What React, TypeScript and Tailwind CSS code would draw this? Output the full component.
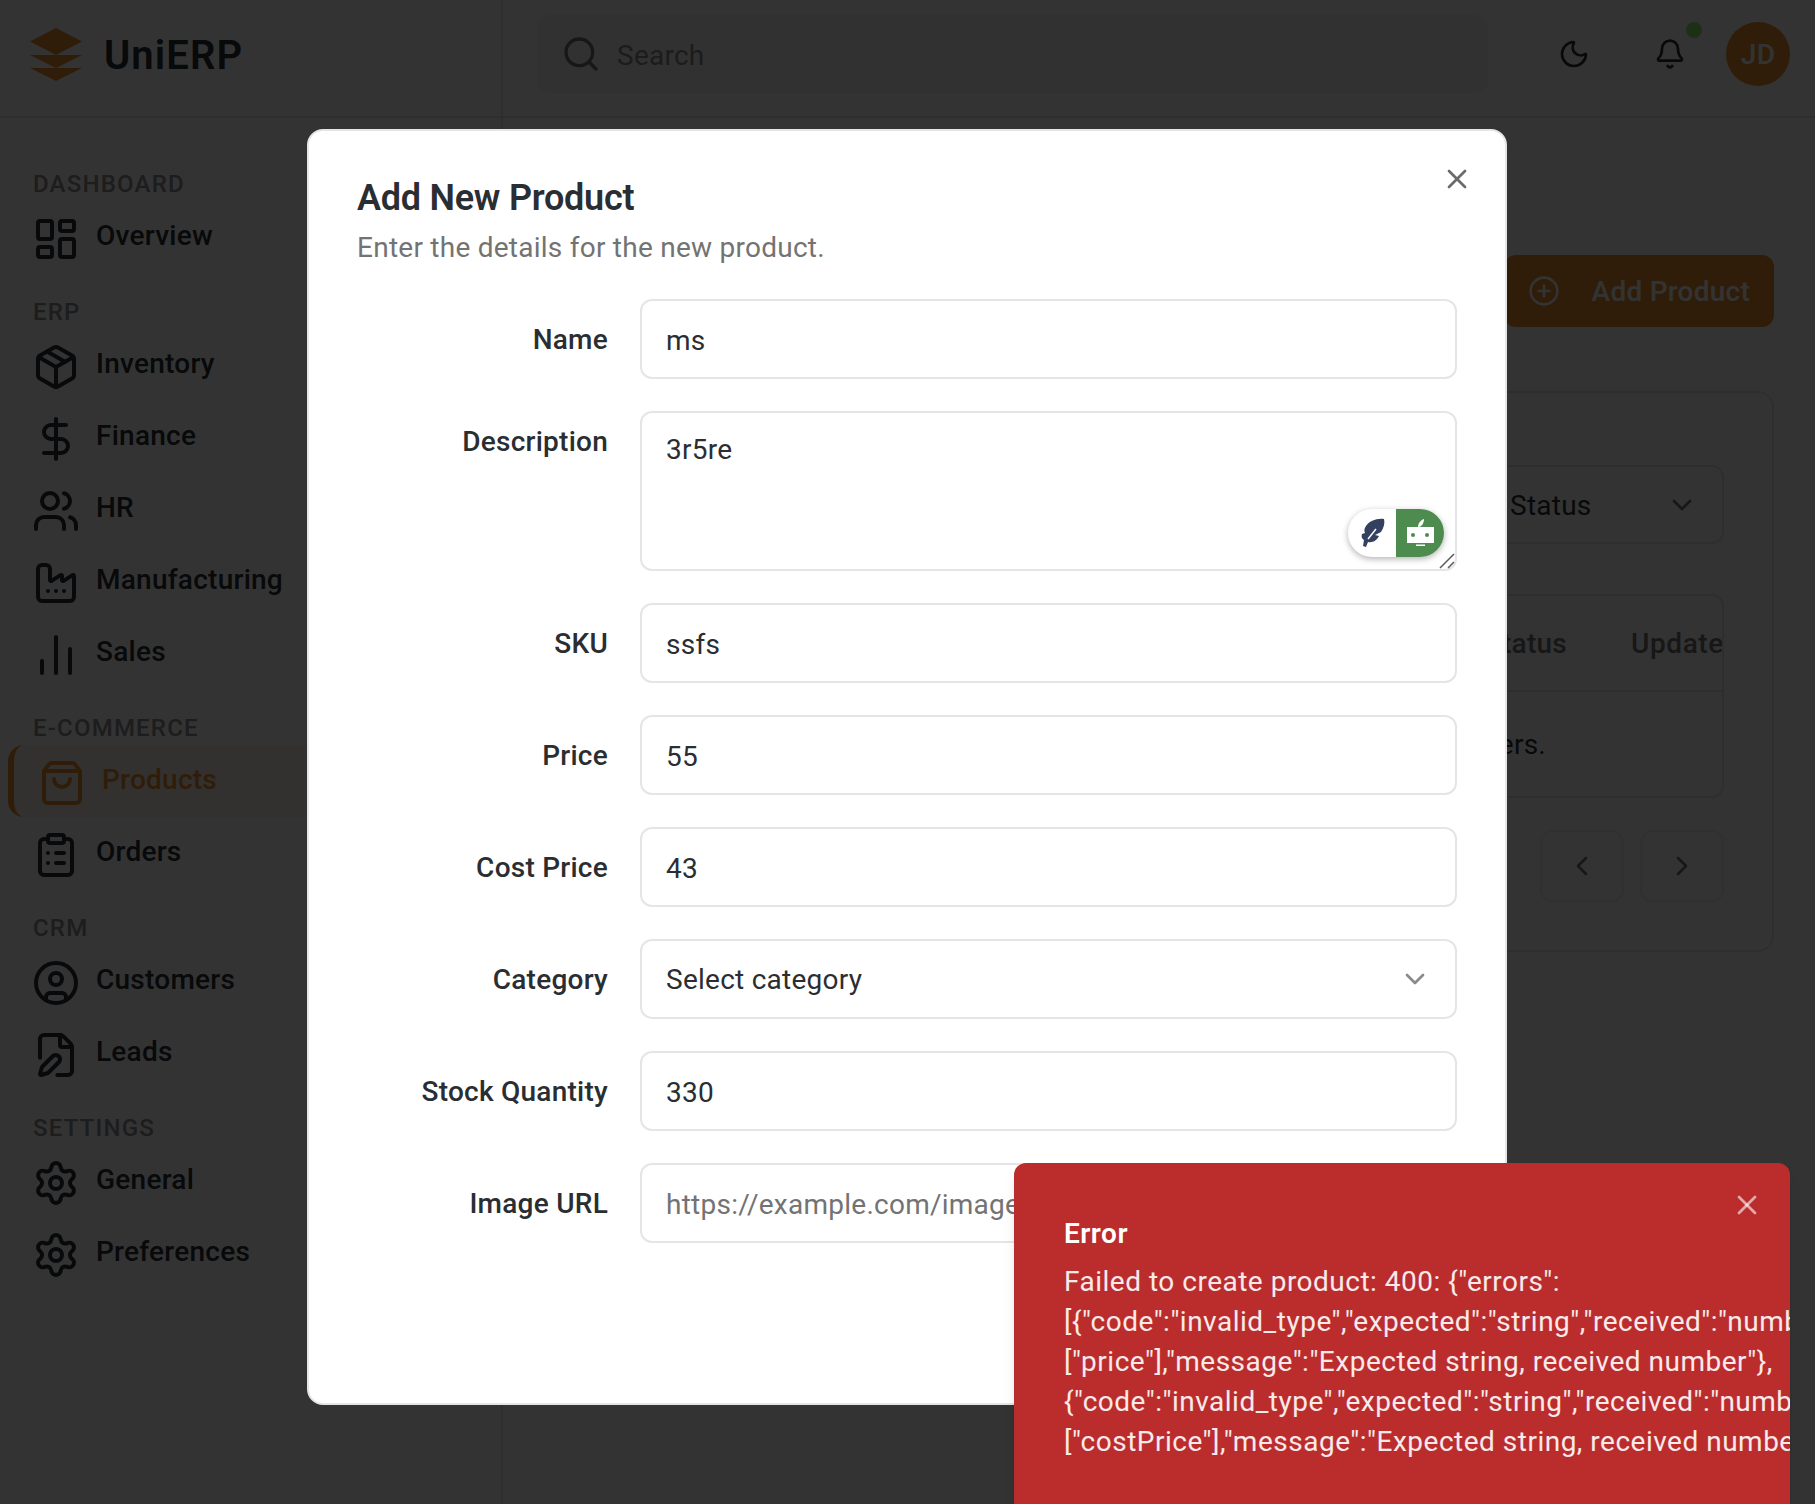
import React from 'react';
import {
  Bell,
  ChartNoAxesColumn,
  ChevronDown,
  ChevronLeft,
  ChevronRight,
  CircleUser,
  ClipboardList,
  DollarSign,
  Factory,
  FilePen,
  LayoutDashboard,
  Moon,
  Package,
  PlusCircle,
  Search,
  Settings,
  ShoppingBag,
  Users,
  X,
} from 'lucide-react';

const navSections = [
  { title: 'DASHBOARD', items: [{ label: 'Overview', icon: LayoutDashboard }] },
  {
    title: 'ERP',
    items: [
      { label: 'Inventory', icon: Package },
      { label: 'Finance', icon: DollarSign },
      { label: 'HR', icon: Users },
      { label: 'Manufacturing', icon: Factory },
      { label: 'Sales', icon: ChartNoAxesColumn },
    ],
  },
  {
    title: 'E-COMMERCE',
    items: [
      { label: 'Products', icon: ShoppingBag, active: true },
      { label: 'Orders', icon: ClipboardList },
    ],
  },
  {
    title: 'CRM',
    items: [
      { label: 'Customers', icon: CircleUser },
      { label: 'Leads', icon: FilePen },
    ],
  },
  {
    title: 'SETTINGS',
    items: [
      { label: 'General', icon: Settings },
      { label: 'Preferences', icon: Settings },
    ],
  },
];

const fields = [
  { label: 'Name', value: 'ms' },
  { label: 'Description', value: '3r5re', area: true },
  { label: 'SKU', value: 'ssfs' },
  { label: 'Price', value: '55' },
  { label: 'Cost Price', value: '43' },
  { label: 'Category', value: 'Select category', select: true },
  { label: 'Stock Quantity', value: '330' },
  { label: 'Image URL', value: '', placeholder: 'https://example.com/image.jpg' },
];

const errorLines = [
  'Failed to create product: 400: {"errors":',
  '[{"code":"invalid_type","expected":"string","received":"number","path":',
  '["price"],"message":"Expected string, received number"},',
  '{"code":"invalid_type","expected":"string","received":"number","path":',
  '["costPrice"],"message":"Expected string, received number"}]}',
];

const inputClass =
  'h-20 w-full rounded-xl border-2 border-[#e5e5e5] bg-white px-6 pt-[2px] text-[28px] text-[#2a2e33] placeholder:text-[#737373] outline-none';

const App: React.FC = () => {
  return (
    <div className="relative flex h-[1504px] overflow-hidden bg-white font-['Roboto',sans-serif] tracking-[0.25px] text-[#2a2e33]">
      <aside className="w-[503px] shrink-0 border-r-2 border-[#e5e5e5]">
        <div className="flex h-[118px] items-center gap-[22px] border-b-2 border-[#e5e5e5] pb-2 pl-[30px]">
          <svg width="52" height="53" viewBox="0 0 52 53" fill="#eb912d">
            <polygon points="26,0 52,13.5 26,27 0,13.5" />
            <polygon points="0,27 52,27 26,40" />
            <polygon points="0,40 52,40 26,53" />
          </svg>
          <span className="pt-1 text-[40px] font-semibold tracking-[1.1px]">UniERP</span>
        </div>
        <nav className="pt-[51px]">
          {navSections.map((section, i) => (
            <div key={section.title} className={i > 0 ? 'mt-6' : ''}>
              <div className="pb-[2px] pl-[33px] text-2xl leading-[30px] font-medium tracking-[1.2px] text-[#909090]">
                {section.title}
              </div>
              {section.items.map((item) => {
                const Icon = item.icon;
                return (
                  <div
                    key={item.label}
                    className={
                      item.active
                        ? 'ml-2 flex h-[72px] items-center gap-4 rounded-l-2xl border-l-[6px] border-[#eb912d] bg-[#eb912d]/10 pl-6 text-[28px] font-medium text-[#eb912d]'
                        : 'ml-2 flex h-[72px] items-center gap-4 pl-6 text-[28px] font-medium'
                    }
                  >
                    <Icon className="mt-[3px] size-12 shrink-0" strokeWidth={2} />
                    <span className="pb-[2px]">{item.label}</span>
                  </div>
                );
              })}
            </div>
          ))}
        </nav>
      </aside>

      <div className="min-w-0 flex-1">
        <header className="flex h-[118px] items-center border-b-2 border-[#e5e5e5] pb-2 pl-[34px]">
          <div className="flex h-[78px] w-[951px] items-center gap-4 rounded-xl bg-[#f5f5f5] pl-6 text-[28px] text-[#8c8c8c]">
            <Search className="size-10 text-[#737373]" strokeWidth={2} />
            <span className="pt-1">Search</span>
          </div>
          <Moon className="ml-[70px] size-8" strokeWidth={2} />
          <div className="relative ml-16">
            <Bell className="size-8" strokeWidth={2} />
            <span className="absolute -top-4 -right-4 size-4 rounded-full bg-[#8aea74]" />
          </div>
          <div className="ml-10 flex size-16 items-center justify-center rounded-full bg-[#eb912d] pt-[2px] text-[28px] font-medium text-white">
            JD
          </div>
        </header>

        <main className="pt-[137px] pr-[41px] pl-12">
          <div className="flex justify-end">
            <div className="flex h-[72px] items-center gap-[32px] rounded-xl bg-[#eb912d] px-6 text-[28px] font-medium text-white">
              <PlusCircle className="size-8" strokeWidth={2} />
              <span className="pt-[2px]">Add Product</span>
            </div>
          </div>
          <div className="mt-16 rounded-2xl border-2 border-[#e5e5e5] p-12">
            <div className="mt-6 flex justify-end">
              <div className="flex h-[79px] w-[240px] items-center justify-between rounded-xl border-2 border-[#e5e5e5] px-6 text-[28px]">
                <span className="pt-[2px]">Status</span>
                <ChevronDown className="size-8 text-[#737373]" strokeWidth={2} />
              </div>
            </div>
            <div className="mt-[50px] rounded-xl border-2 border-[#e5e5e5]">
              <div className="flex h-[96px] items-center justify-end border-b-2 border-[#e5e5e5] pt-[2px] text-[28px] font-medium text-[#737373]">
                <span>Status</span>
                <span className="ml-16 w-[91px] overflow-hidden tracking-[0.6px] whitespace-nowrap">Update</span>
              </div>
              <div className="flex h-[104px] items-center justify-end pt-[2px] pr-[176px] text-[28px]">
                No products found matching your filters.
              </div>
            </div>
            <div className="mt-8 flex justify-end gap-4">
              <div className="flex h-[72px] w-[84px] items-center justify-center rounded-xl border-2 border-[#f0f0f0] text-[#737373]">
                <ChevronLeft className="size-8" strokeWidth={2} />
              </div>
              <div className="flex h-[72px] w-[84px] items-center justify-center rounded-xl border-2 border-[#f0f0f0] text-[#737373]">
                <ChevronRight className="size-8" strokeWidth={2} />
              </div>
            </div>
          </div>
        </main>
      </div>

      <div className="absolute inset-0 bg-black/80" />

      <div className="absolute top-[129px] left-[307px] w-[1200px] rounded-2xl border-2 border-[#e5e5e5] bg-white p-12">
        <X className="absolute top-[32px] right-[32px] size-8 text-[#6b6b6b]" strokeWidth={2} />
        <h2 className="mt-px text-[36px] leading-none font-semibold tracking-[-0.25px]">Add New Product</h2>
        <p className="mt-3 text-[28px] leading-10 text-[#737373]">Enter the details for the new product.</p>
        <div className="mt-[31px] grid grid-cols-4 gap-8">
          {fields.map((field) => (
            <React.Fragment key={field.label}>
              <label
                className={
                  field.area
                    ? 'pt-[11px] text-right text-[28px] leading-10 font-medium'
                    : 'flex h-20 items-center justify-end pt-[2px] text-[28px] font-medium'
                }
              >
                {field.label}
              </label>
              <div className="relative col-span-3">
                {field.area ? (
                  <>
                    <textarea
                      readOnly
                      value={field.value}
                      className="block h-40 w-full resize-none rounded-xl border-2 border-[#e5e5e5] bg-white px-6 pt-[17px] pb-4 text-[28px] leading-10 text-[#2a2e33] outline-none"
                    />
                    <div className="absolute right-[13px] bottom-[14px] flex h-12 w-24 overflow-hidden rounded-full bg-white shadow-[0_2px_6px_rgba(0,0,0,0.3)]">
                      <div className="h-12 w-12">
                        <svg width="48" height="48" viewBox="0 0 48 48">
                          <path
                            fill="#34405f"
                            d="M36 10C29 9 21 12 18 17C16 20 16 22 17 24L14 25C13 28 14 30 16 31L15 37L18 38L20 33C25 34 29 31 31 27L27 26L33 23C36 18 37 14 36 10Z"
                          />
                          <path stroke="#fff" strokeWidth="1.5" d="M20 30L28 20" />
                        </svg>
                      </div>
                      <div className="h-12 w-12 bg-[#4e8b4e]">
                        <svg width="48" height="48" viewBox="0 0 48 48">
                          <path fill="#fff" d="M22 18C22 14 25 11 28 10C28 14 26 17 23 18Z" />
                          <rect x="11" y="18" width="27" height="16" fill="#fff" />
                          <circle cx="17" cy="26" r="2" fill="#4e8b4e" />
                          <circle cx="31" cy="26" r="2" fill="#4e8b4e" />
                          <rect x="20" y="35.5" width="9" height="1.5" fill="#fff" />
                        </svg>
                      </div>
                    </div>
                    <svg
                      className="absolute right-[2px] bottom-[2px]"
                      width="16"
                      height="16"
                      viewBox="0 0 16 16"
                      stroke="#5a5a5a"
                      strokeWidth="1.5"
                    >
                      <path d="M15 1L1 15M15 9L9 15" />
                    </svg>
                  </>
                ) : field.select ? (
                  <div className={`${inputClass} flex items-center justify-between`}>
                    {field.value}
                    <ChevronDown className="-mt-[2px] size-8 text-[#8a8a8a]" strokeWidth={2} />
                  </div>
                ) : (
                  <input readOnly value={field.value} placeholder={field.placeholder} className={inputClass} />
                )}
              </div>
            </React.Fragment>
          ))}
        </div>
        <div className="mt-8 flex justify-end">
          <div className="flex h-20 items-center rounded-xl bg-[#eb912d] px-8 text-[28px] font-medium text-white">
            Add Product
          </div>
        </div>
      </div>

      <div className="absolute top-[1163px] left-[1014px] h-[380px] w-[776px] overflow-hidden rounded-xl bg-[#bb2c2c] pt-[51px] pl-[50px] tracking-[0.5px] text-white shadow-lg">
        <X className="absolute top-[26px] right-[27px] size-8 text-white/60" strokeWidth={2} />
        <div className="text-[28px] leading-10 font-semibold">Error</div>
        <div className="mt-2 whitespace-nowrap text-[28px] leading-10 text-white/90">
          {errorLines.map((line) => (
            <div key={line}>{line}</div>
          ))}
        </div>
      </div>
    </div>
  );
};

export default App;
